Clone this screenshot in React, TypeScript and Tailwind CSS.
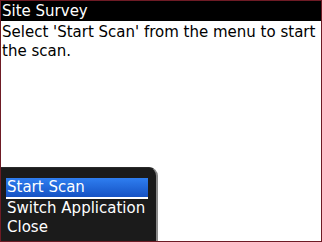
export default function App() {
  return (
    <div
      className="relative h-[242px] w-[322px] overflow-hidden border border-[#6e1b25] bg-white"
      style={{ fontFamily: '"DejaVu Sans", sans-serif' }}
    >
      <div className="flex h-[20px] items-center bg-black px-[1px] text-[15px] leading-none text-white">
        Site Survey
      </div>
      <p className="px-[1px] pt-[2px] text-[15px] leading-[19px] text-black">
        Select 'Start Scan' from the menu to start the scan.
      </p>

      {/* menu */}
      <div className="absolute bottom-0 left-0 w-[157px] rounded-tr-[9px] border-r-2 border-t border-r-[#8a8a8a] border-t-[#2a2a2a] bg-[#1b1b1b] pb-[4px] pl-[5px] pr-[8px] pt-[10px] text-[15px] leading-[19px] text-white">
        <div className="border-b-2 border-white bg-[#1f63d6] bg-gradient-to-b from-[#2f7ef0] to-[#1652c4] pl-[1px]">
          Start Scan
        </div>
        <div className="pl-[1px]">Switch Application</div>
        <div className="pl-[1px]">Close</div>
      </div>
    </div>
  );
}
